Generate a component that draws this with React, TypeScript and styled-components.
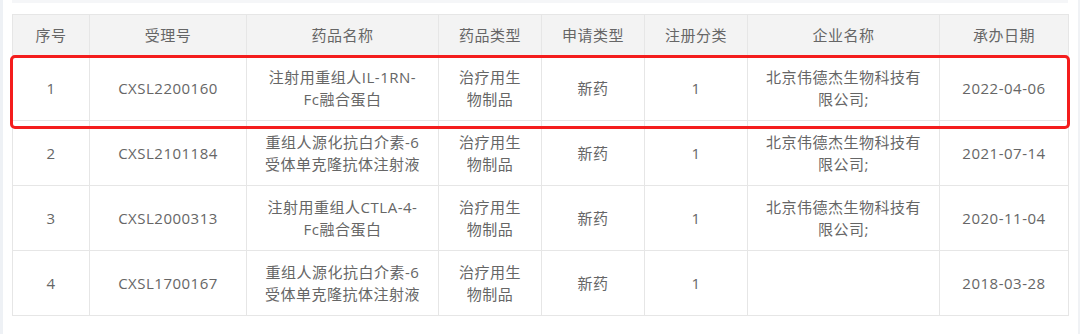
import React from 'react';
import styled, { createGlobalStyle } from 'styled-components';

const GlobalStyle = createGlobalStyle`
  html, body {
    margin: 0;
    padding: 0;
    background: #ffffff;
  }
`;

const Page = styled.div`
  width: 1080px;
  height: 334px;
  box-sizing: border-box;
  border-left: 3px solid #eef1f5;
  border-right: 2px solid #f0f2f5;
  padding-left: 9px;
  font-family: 'Open Sans', 'Noto Sans CJK SC', sans-serif;
  overflow: hidden;
`;

const TopBand = styled.div`
  width: 1056px;
  height: 3px;
  background: #f5f6f8;
  margin-bottom: 11px;
`;

const TableWrap = styled.div`
  position: relative;
  width: 1056px;
`;

const Table = styled.table`
  width: 1056px;
  border-collapse: collapse;
  table-layout: fixed;
  color: #666666;
  font-size: 15px;
  letter-spacing: 0.5px;
  line-height: 22px;
`;

const HeadCell = styled.th`
  height: 40px;
  padding: 0 17px;
  background: #f3f3f3;
  border: 1px solid #e6e6e6;
  font-weight: 400;
  text-align: center;
  vertical-align: middle;
`;

const Cell = styled.td`
  height: 64px;
  padding: 0 17px;
  border: 1px solid #e6e6e6;
  text-align: center;
  vertical-align: middle;
  word-break: normal;
`;

const Highlight = styled.div`
  position: absolute;
  left: -2px;
  top: 41px;
  width: 1060px;
  height: 74px;
  box-sizing: border-box;
  border: 3px solid #f41d1d;
  border-radius: 5px;
  pointer-events: none;
`;

const columns = [
  { title: '序号', width: 77 },
  { title: '受理号', width: 157 },
  { title: '药品名称', width: 192 },
  { title: '药品类型', width: 103 },
  { title: '申请类型', width: 103 },
  { title: '注册分类', width: 103 },
  { title: '企业名称', width: 192 },
  { title: '承办日期', width: 129 },
];

const company = '北京伟德杰生物科技有限公司;';

const rows = [
  ['1', 'CXSL2200160', '注射用重组人IL-1RN-Fc融合蛋白', '治疗用生物制品', '新药', '1', company, '2022-04-06'],
  ['2', 'CXSL2101184', '重组人源化抗白介素-6受体单克隆抗体注射液', '治疗用生物制品', '新药', '1', company, '2021-07-14'],
  ['3', 'CXSL2000313', '注射用重组人CTLA-4-Fc融合蛋白', '治疗用生物制品', '新药', '1', company, '2020-11-04'],
  ['4', 'CXSL1700167', '重组人源化抗白介素-6受体单克隆抗体注射液', '治疗用生物制品', '新药', '1', '', '2018-03-28'],
];

export default function App() {
  return (
    <>
      <GlobalStyle />
      <Page>
        <TopBand />
        <TableWrap>
          <Table>
            <colgroup>
              {columns.map(col => (
                <col key={col.title} style={{ width: col.width }} />
              ))}
            </colgroup>
            <thead>
              <tr>
                {columns.map(col => (
                  <HeadCell key={col.title}>{col.title}</HeadCell>
                ))}
              </tr>
            </thead>
            <tbody>
              {rows.map(row => (
                <tr key={row[1]}>
                  {row.map((value, i) => (
                    <Cell key={i}>{value}</Cell>
                  ))}
                </tr>
              ))}
            </tbody>
          </Table>
          <Highlight />
        </TableWrap>
      </Page>
    </>
  );
}
